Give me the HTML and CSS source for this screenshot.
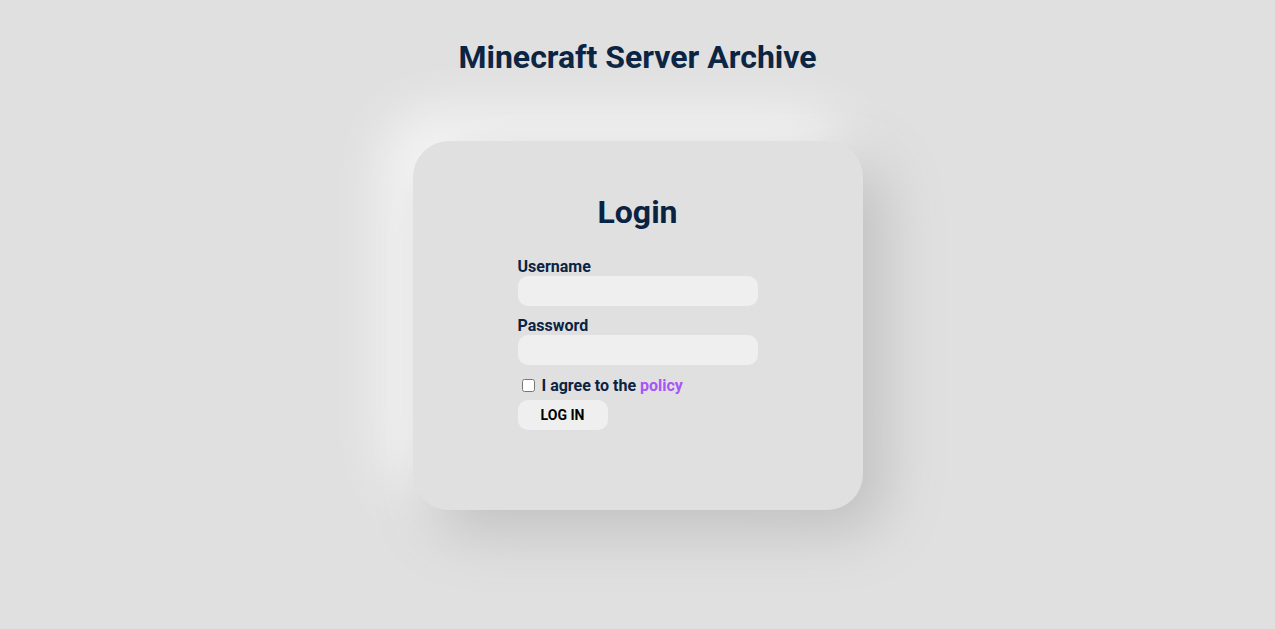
FILE: index.html
```html
<!DOCTYPE html>
<html lang="en">
<head>
<meta charset="utf-8">
<title>Minecraft Server Archive</title>
<link rel="stylesheet" href="styles.css">
</head>
<body>
<main class="page">
  <h1 class="site-title">Minecraft Server Archive</h1>
  <section class="card">
    <h2 class="card-title">Login</h2>
    <form class="login-form">
      <label class="field-label" for="username">Username</label>
      <input class="field-input" id="username" type="text">
      <label class="field-label field-label-spaced" for="password">Password</label>
      <input class="field-input" id="password" type="password">
      <label class="agree"><input type="checkbox" class="agree-box"> I agree to the <a class="policy" href="#">policy</a></label>
      <button type="button" class="login-btn">LOG IN</button>
    </form>
  </section>
</main>
</body>
</html>
```
FILE: styles.css
```css
html, body {
  margin: 0;
  padding: 0;
  background: #e0e0e0;
}
body {
  font-family: Roboto, "Liberation Sans", sans-serif;
  color: #0a2342;
  height: 629px;
  overflow: hidden;
}
.page {
  display: flex;
  flex-direction: column;
  align-items: center;
}
.site-title {
  margin: 38px 0 0;
  font-size: 32px;
  line-height: 38px;
  font-weight: 700;
}
.card {
  margin-top: 65px;
  width: 450px;
  height: 369px;
  box-sizing: border-box;
  padding-top: 52px;
  background: #e0e0e0;
  border-radius: 36px;
  box-shadow: 20px 20px 60px #bebebe, -20px -20px 60px #ffffff;
  display: flex;
  flex-direction: column;
  align-items: center;
}
.card-title {
  margin: 0;
  font-size: 32px;
  line-height: 38px;
  font-weight: 700;
}
.login-form {
  width: 240px;
  margin-top: 26px;
  display: flex;
  flex-direction: column;
  align-items: flex-start;
}
.field-label {
  font-size: 16px;
  line-height: 19px;
  font-weight: 700;
}
.field-label-spaced {
  margin-top: 10px;
}
.field-input {
  width: 240px;
  height: 30px;
  box-sizing: border-box;
  border: none;
  border-radius: 10px;
  background: #efefef;
  outline: none;
  padding: 0 10px;
  font-family: inherit;
}
.agree {
  margin-top: 11px;
  font-size: 16px;
  line-height: 19px;
  font-weight: 700;
  display: flex;
  align-items: center;
  white-space: pre;
}
.agree-box {
  width: 13px;
  height: 13px;
  margin: 0 3px 0 4px;
}
.policy {
  color: #a855f7;
  text-decoration: none;
}
.login-btn {
  margin-top: 5px;
  width: 90px;
  height: 30px;
  border: none;
  border-radius: 10px;
  background: #efefef;
  font-family: inherit;
  font-size: 14px;
  font-weight: 700;
  color: #000;
}
```
